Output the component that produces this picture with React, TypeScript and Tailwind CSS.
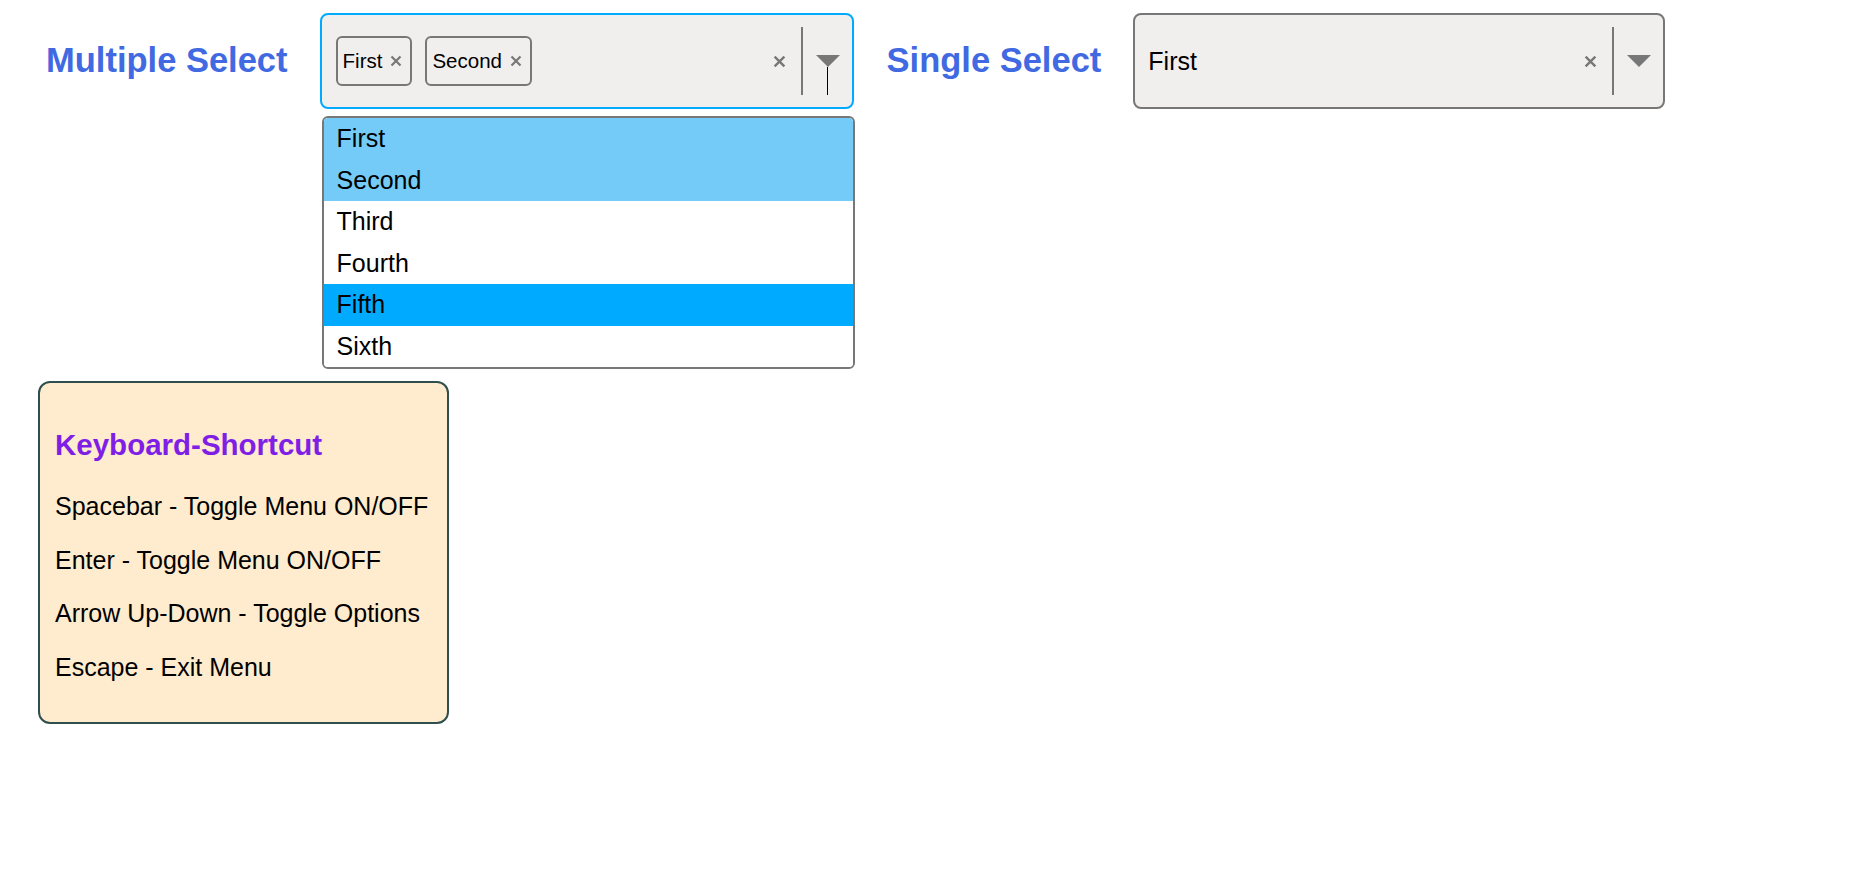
import { useState } from 'react'

const options = ['First', 'Second', 'Third', 'Fourth', 'Fifth', 'Sixth']

function Cross({ size }: { size: number }) {
  return (
    <svg width={size} height={size} viewBox="0 0 12 12" aria-hidden>
      <path d="M1.5 1.5 L10.5 10.5 M10.5 1.5 L1.5 10.5" stroke="#777777" strokeWidth="2.2" strokeLinecap="butt" />
    </svg>
  )
}

function Caret({ withStem }: { withStem?: boolean }) {
  return (
    <div className="relative flex h-[12px] w-[24px] items-start">
      <svg width="24" height="12" viewBox="0 0 24 12" aria-hidden>
        <path d="M0 0 L24 0 L12 12 Z" fill="#777777" />
      </svg>
      {withStem && <div className="absolute left-[11.5px] top-[12px] h-[28px] w-px bg-black" />}
    </div>
  )
}

function Controls({ stem }: { stem?: boolean }) {
  return (
    <div className="ml-auto flex items-center">
      <Cross size={13} />
      <div className="ml-[15px] h-[68px] w-[2px] bg-[#777]" />
      <div className="ml-[13px] mr-[12px]">
        <Caret withStem={stem} />
      </div>
    </div>
  )
}

function Chip({ label }: { label: string }) {
  return (
    <div className="flex h-[50px] items-center gap-[8px] rounded-[6px] border-2 border-[#777] pl-[5px] pr-[8px] text-[20.5px] leading-[1.15] text-black">
      <span>{label}</span>
      <Cross size={12} />
    </div>
  )
}

export default function App() {
  const [selected] = useState(['First', 'Second'])
  const highlighted = 'Fifth'

  return (
    <div className="min-h-screen bg-white pt-[13px] font-['Liberation_Sans',Arial,sans-serif] leading-[1.15]">
      <div className="flex items-start">
        <h2 className="ml-[46px] flex h-[96px] items-center text-[34.5px] font-bold leading-[1.15] text-[#4169e1]">
          Multiple Select
        </h2>
        <div className="ml-[32px] w-[534px]">
          <div className="flex h-[96px] items-center rounded-[8px] border-2 border-[#00aaff] bg-[#f0efee] pl-[14px]">
            <div className="flex items-center gap-[13px]">
              {selected.map((s) => (
                <Chip key={s} label={s} />
              ))}
            </div>
            <Controls stem />
          </div>
          <div className="ml-[2px] mt-[7px] w-[533px] overflow-hidden rounded-[6px] border-2 border-[#777] bg-white">
            {options.map((o) => {
              const isSel = selected.includes(o)
              const isHi = o === highlighted
              return (
                <div
                  key={o}
                  className={
                    'flex h-[41.5px] items-center pl-[13px] text-[25px] leading-[1.15] text-black ' +
                    (isHi ? 'bg-[#00aaff]' : isSel ? 'bg-[#74cbf8]' : 'bg-white')
                  }
                >
                  {o}
                </div>
              )
            })}
          </div>
        </div>
        <h2 className="ml-[33px] flex h-[96px] items-center text-[34.5px] font-bold leading-[1.15] text-[#4169e1]">
          Single Select
        </h2>
        <div className="ml-[32px] flex h-[96px] w-[532px] items-center rounded-[8px] border-2 border-[#777] bg-[#f0efee] pl-[13px]">
          <span className="text-[25px] leading-[1.15] text-black">First</span>
          <Controls />
        </div>
      </div>

      <div className="ml-[38px] mt-[12px] w-[411px] rounded-[12px] border-2 border-[#2f4f4f] bg-[#ffebcd] px-[15px] py-[15px]">
        <h3 className="my-[30px] text-[29.5px] font-bold leading-[1.15] text-[#7f1fe6]">Keyboard-Shortcut</h3>
        <p className="my-[25px] text-[25px] leading-[1.15] text-black">Spacebar - Toggle Menu ON/OFF</p>
        <p className="my-[25px] text-[25px] leading-[1.15] text-black">Enter - Toggle Menu ON/OFF</p>
        <p className="my-[25px] text-[25px] leading-[1.15] text-black">Arrow Up-Down - Toggle Options</p>
        <p className="my-[25px] text-[25px] leading-[1.15] text-black">Escape - Exit Menu</p>
      </div>
    </div>
  )
}
